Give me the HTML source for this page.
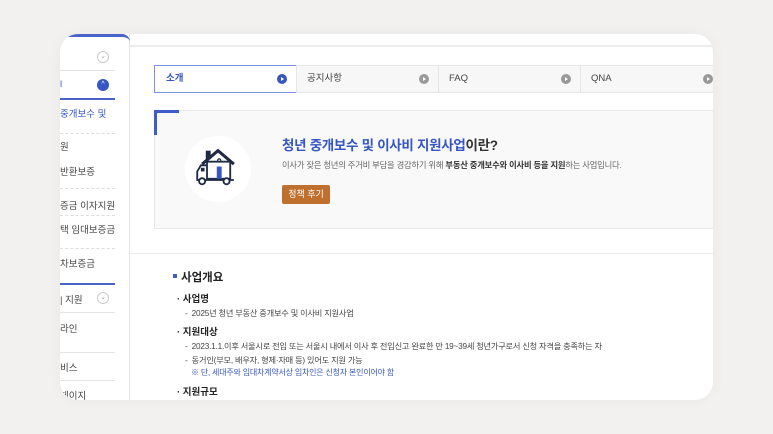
<!DOCTYPE html>
<html><head><meta charset="utf-8"><style>
*{margin:0;padding:0;box-sizing:border-box}
body{width:773px;height:434px;background:#f2f1ef;font-family:"Liberation Sans","Noto Sans CJK KR",sans-serif;position:relative;overflow:hidden;color:#333}
.card{position:absolute;left:60px;top:34px;width:653px;height:366px;background:#fff;border-radius:18px;overflow:hidden;box-shadow:0 0 14px rgba(0,0,0,0.04)}
.a{position:absolute;white-space:nowrap}
.side{position:absolute;left:0;top:0;width:70px;height:366px;border-right:1px solid #e6e6e6}
.sl{position:absolute;font-size:9.5px;color:#444;left:0}
.dash{position:absolute;left:0;width:55px;border-top:1px dashed #ddd}
.sol{position:absolute;left:0;width:55px;border-top:1px solid #e4e4e4}
.chev{position:absolute;width:12px;height:12px;border:1px solid #ccc;border-radius:50%;font-size:7px;color:#999;text-align:center;line-height:10px}
.tab{position:absolute;top:31px;height:28px;background:#f7f7f7;border:1px solid #e6e6e6;font-size:9.5px;color:#444;padding-left:10px;line-height:26px}
.dot{position:absolute;top:8px;width:10px;height:10px;border-radius:50%;background:#999}
.dot:after{content:"";position:absolute;left:4px;top:3px;border-left:3px solid #fff;border-top:2px solid transparent;border-bottom:2px solid transparent}
.t{font-size:8.2px;color:#444;letter-spacing:-0.2px}
.h{font-weight:bold;color:#222;font-size:9.5px}
</style></head><body>
<div class="card">
 <div class="side">
  <div class="a" style="left:0;top:0;width:70px;height:8px;border-top:3px solid #4a63c9;border-radius:0 10px 0 0"></div>
  <div class="chev" style="left:37px;top:17px">⌄</div>
  <div class="sol" style="top:36px"></div>
  <div class="sl" style="top:45px;color:#3556c4">l</div>
  <div class="a" style="left:37px;top:45px;width:12px;height:12px;border-radius:50%;background:#3556c4;color:#fff;font-size:7px;text-align:center;line-height:12px">^</div>
  <div class="a" style="left:0;top:64px;width:55px;border-top:2px solid #4a63c9"></div>
  <div class="sl" style="top:72px;color:#3556c4">중개보수 및</div>
  <div class="dash" style="top:99px"></div>
  <div class="sl" style="top:105px">원</div>
  <div class="sl" style="top:130px">반환보증</div>
  <div class="dash" style="top:154px"></div>
  <div class="sl" style="top:164px">증금 이자지원</div>
  <div class="dash" style="top:181px"></div>
  <div class="sl" style="top:188px">택 임대보증금</div>
  <div class="dash" style="top:214px"></div>
  <div class="sl" style="top:222px">차보증금</div>
  <div class="a" style="left:0;top:249px;width:55px;border-top:2px solid #4a63c9"></div>
  <div class="sl" style="top:258px">| 지원</div>
  <div class="chev" style="left:37px;top:258px">⌄</div>
  <div class="sol" style="top:278px"></div>
  <div class="sl" style="top:287px">라인</div>
  <div class="sol" style="top:318px"></div>
  <div class="sl" style="top:326px">비스</div>
  <div class="sol" style="top:346px"></div>
  <div class="sl" style="top:354px">페이지</div>
 </div>
 <div class="a" style="left:70px;top:11px;width:583px;border-top:2px solid #ececec"></div>
 <div class="tab" style="left:94px;width:143px;background:#fff;border-color:#7b92e0;color:#3556c4;font-weight:bold;padding-left:11px">소개<span class="dot" style="left:122px;background:#3556c4"></span></div>
 <div class="tab" style="left:236px;width:143px">공지사항<span class="dot" style="left:122px"></span></div>
 <div class="tab" style="left:378px;width:143px">FAQ<span class="dot" style="left:122px"></span></div>
 <div class="tab" style="left:520px;width:143px">QNA<span class="dot" style="left:122px"></span></div>
 <div class="a" style="left:94px;top:76px;width:570px;height:119px;background:#f9f9f9;border:1px solid #e9e9e9"></div>
 <div class="a" style="left:94px;top:76px;width:25px;height:25px;border-left:3px solid #3f5cc8;border-top:3px solid #3f5cc8"></div>
 <div class="a" style="left:125px;top:102px;width:66px;height:66px;border-radius:50%;background:#fff">
  <svg width="66" height="66" viewBox="6 8 54 54">
   <rect x="23" y="20" width="4" height="7" fill="#1f2a44"/>
   <path d="M20 31 L33 20 L46 31" fill="none" stroke="#1f2a44" stroke-width="2.5"/>
   <rect x="24" y="29" width="19" height="14" fill="#fff" stroke="#1f2a44" stroke-width="1.5"/>
   <rect x="32" y="33" width="4" height="10" fill="#3556c4"/>
   <circle cx="34" cy="28" r="1.3" fill="none" stroke="#1f2a44"/>
   <path d="M24 32 H19 L16 37 V44 H46" fill="none" stroke="#1f2a44" stroke-width="1.5"/>
   <rect x="19" y="34" width="3" height="3" fill="#1f2a44"/>
   <circle cx="20" cy="45" r="2.5" fill="#fff" stroke="#1f2a44" stroke-width="1.5"/>
   <circle cx="40" cy="45" r="2.5" fill="#fff" stroke="#1f2a44" stroke-width="1.5"/>
  </svg>
 </div>
 <div class="a" style="left:222px;top:100px;font-size:13.5px;font-weight:bold;color:#3556c4;letter-spacing:-0.3px">청년 중개보수 및 이사비 지원사업<span style="color:#333">이란?</span></div>
 <div class="a" style="left:222px;top:125px;font-size:8.3px;color:#666;letter-spacing:-0.2px">이사가 잦은 청년의 주거비 부담을 경감하기 위해 <b style="color:#333">부동산 중개보수와 이사비 등을 지원</b>하는 사업입니다.</div>
 <div class="a" style="left:222px;top:151px;width:48px;height:19px;background:#c0702e;border-radius:2px;color:#fff;font-size:9px;text-align:center;line-height:19px">정책 후기</div>
 <div class="a" style="left:70px;top:219px;width:583px;border-top:1px solid #ececec"></div>
 <div class="a" style="left:113px;top:240px;width:4px;height:4px;background:#3f5cc8"></div>
 <div class="a" style="left:121px;top:235px;font-size:11.5px;font-weight:bold;color:#222">사업개요</div>
 <div class="a h" style="left:117px;top:257px">· 사업명</div>
 <div class="a t" style="left:125px;top:273px">-&nbsp; 2025년 청년 부동산 중개보수 및 이사비 지원사업</div>
 <div class="a h" style="left:117px;top:290px">· 지원대상</div>
 <div class="a t" style="left:125px;top:306px">-&nbsp; 2023.1.1.이후 서울시로 전입 또는 서울시 내에서 이사 후 전입신고 완료한 만 19~39세 청년가구로서 신청 자격을 충족하는 자</div>
 <div class="a t" style="left:125px;top:320px">-&nbsp; 동거인(부모, 배우자, 형제·자매 등) 있어도 지원 가능</div>
 <div class="a" style="left:131px;top:333px;font-size:8px;color:#3556c4;letter-spacing:-0.2px">※ 단, 세대주와 임대차계약서상 임차인은 신청자 본인이어야 함</div>
 <div class="a h" style="left:117px;top:350px">· 지원규모</div>
</div>
</body></html>
